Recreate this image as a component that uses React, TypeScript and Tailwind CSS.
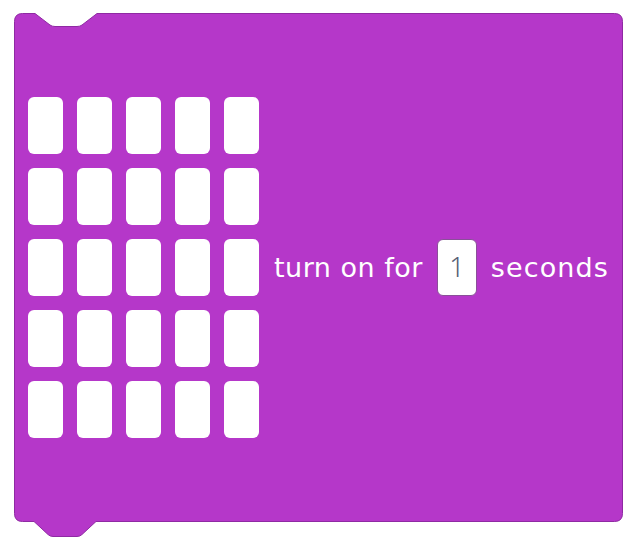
const rows = 5;
const cols = 5;

// block outline with the stack notches on top and bottom
function BlockShape() {
  const d =
    "M14.5 21.5 Q14.5 13.5 22.5 13.5 L35 13.5 L50 25 Q52 26.5 55 26.5 L77 26.5 Q80 26.5 82 25 L97 13.5 " +
    "L614.5 13.5 Q622.5 13.5 622.5 21.5 L622.5 513.5 Q622.5 521.5 614.5 521.5 " +
    "L96 521.5 L82 534.5 Q80 536.5 77 536.5 L53 536.5 Q50 536.5 48 534.5 L34 521.5 " +
    "L22.5 521.5 Q14.5 521.5 14.5 513.5 Z";
  return (
    <svg className="absolute inset-0" width="636" height="547" viewBox="0 0 636 547">
      <path d={d} fill="#b537c9" stroke="#8f2aa3" strokeWidth="1" />
    </svg>
  );
}

export default function App() {
  return (
    <div className="relative h-[547px] w-[636px] bg-white pl-[14px] pt-[13px]" style={{ fontFamily: '"DejaVu Sans", sans-serif' }}>
      <BlockShape />
      <div className="relative flex h-[508px] w-[609px] items-center pl-[14px]">
        <div className="grid grid-cols-5 gap-x-[14px] gap-y-[14px]">
          {Array.from({ length: rows * cols }).map((_, i) => (
            <div key={i} className="h-[57px] w-[35px] rounded-[6px] bg-white" />
          ))}
        </div>
        <span className="ml-[15px] text-[27px] leading-none tracking-[0.5px] text-white">turn on for</span>
        <div className="ml-[14px] flex h-[57px] w-[40px] items-center justify-center rounded-[6px] border border-[#8a4f99] bg-white font-['Noto_Sans'] text-[27px] font-light text-[#575e75]">
          1
        </div>
        <span className="ml-[14px] text-[27px] leading-none tracking-[1.1px] text-white">seconds</span>
      </div>
    </div>
  );
}
